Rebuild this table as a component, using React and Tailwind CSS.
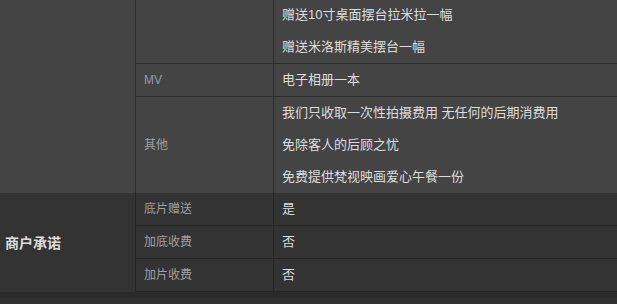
const font = { fontFamily: '"Liberation Sans", "Noto Sans CJK SC", sans-serif' }

function Lines({ items }) {
  return (
    <div className="pl-2 text-[13px] leading-[32px] text-[#dddddd]">
      {items.map(t => <div key={t}>{t}</div>)}
    </div>
  )
}

export default function App() {
  const promises = [
    ['底片赠送', '是'],
    ['加底收费', '否'],
    ['加片收费', '否'],
  ]

  return (
    <div className="w-[617px] h-[304px] overflow-hidden bg-[#303030]" style={font}>
      <div className="-mt-px">
        {/* 套餐内容 */}
        <div className="flex bg-[#444444]">
          <div className="w-[136px] shrink-0 border-r border-[#2c2c2c]" />
          <div className="flex-1">
            <div className="flex border-b border-[#2c2c2c]">
              <div className="w-[138px] shrink-0 border-r border-[#2c2c2c]" />
              <Lines items={['赠送10寸桌面摆台拉米拉一幅', '赠送米洛斯精美摆台一幅']} />
            </div>
            <div className="flex border-b border-[#2c2c2c]">
              <div className="w-[138px] shrink-0 border-r border-[#2c2c2c] pl-2 flex items-center text-xs text-[#9a9aa6]">MV</div>
              <Lines items={['电子相册一本']} />
            </div>
            <div className="flex">
              <div className="w-[138px] shrink-0 border-r border-[#2c2c2c] pl-2 flex items-center text-xs text-[#a0a0a0]">其他</div>
              <Lines items={['我们只收取一次性拍摄费用 无任何的后期消费用', '免除客人的后顾之忧', '免费提供梵视映画爱心午餐一份']} />
            </div>
          </div>
        </div>

        {/* 商户承诺 */}
        <div className="flex bg-[#333333]">
          <div className="w-[136px] shrink-0 border-r border-[#262626] pl-[5px] flex items-center text-sm font-bold text-[#dddddd]">
            商户承诺
          </div>
          <div className="flex-1">
            {promises.map(([k, v]) => (
              <div key={k} className="flex h-[33px] border-b border-[#262626]">
                <div className="w-[138px] shrink-0 border-r border-[#262626] pl-2 flex items-center text-xs text-[#a0a0a0]">{k}</div>
                <div className="pl-2 flex items-center text-[13px] text-[#dddddd]">{v}</div>
              </div>
            ))}
          </div>
        </div>
        <div className="h-[6px] bg-[#2a2a2a]" />
      </div>
    </div>
  )
}
